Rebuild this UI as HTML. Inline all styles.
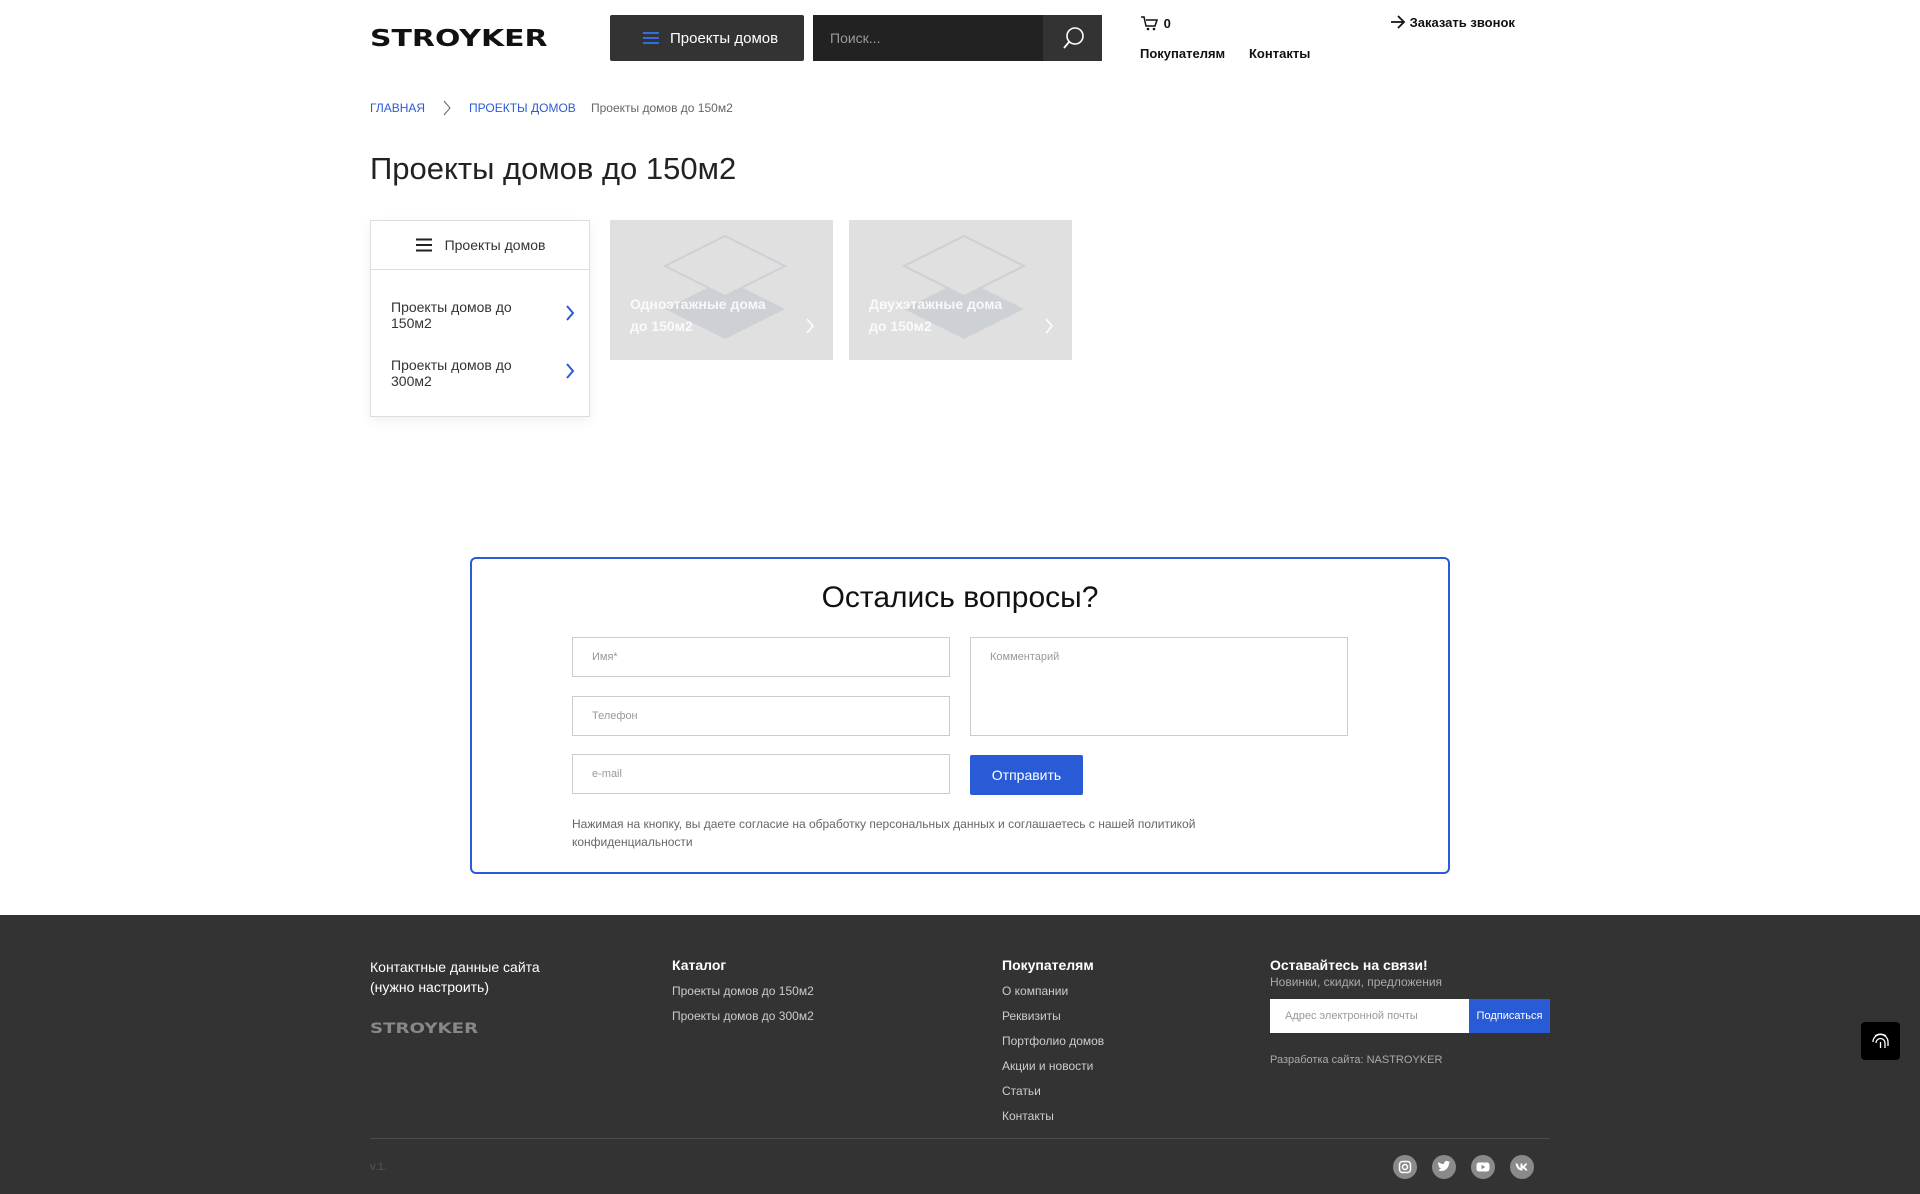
<!DOCTYPE html>
<html><head><meta charset="utf-8"><style>
*{box-sizing:border-box;margin:0;padding:0}
body{width:1920px;height:1194px;position:relative;font-family:"Liberation Sans",sans-serif;background:#fff;color:#222;overflow:hidden}
.a{position:absolute}
.logo{left:370px;top:26px;font-weight:bold;font-size:23px;letter-spacing:0px;color:#111;font-family:"DejaVu Sans",sans-serif;transform:scaleX(1.3);transform-origin:left}
.mbtn{left:610px;top:15px;width:194px;height:46px;background:#333;border-radius:2px;color:#fff;font-size:15px;display:flex;align-items:center;padding-left:32px}
.srch{left:813px;top:15px;width:289px;height:46px;background:#222;color:#999;font-size:14px;padding:15px 0 0 17px}
.sbtn{left:1043px;top:15px;width:59px;height:46px;background:#333}
.nav{font-size:13px;font-weight:bold;color:#111}
.bc{top:101px;font-size:12px}
.side{left:370px;top:220px;width:220px;height:197px;border:1px solid #ddd;box-shadow:0 4px 12px rgba(0,0,0,.06);background:#fff}
.card{top:220px;width:223px;height:140px;background:#e0e0e0;overflow:hidden}
.card .t{position:absolute;left:20px;top:73px;color:#fff;font-weight:bold;font-size:14px;line-height:22px;opacity:.85}
.inp{border:1px solid #ccc;font-size:11px;color:#999;padding:13px 0 0 19px}
.fl{font-size:12px;color:#ccc}
.fh{font-size:14px;font-weight:bold;color:#fff;top:957px}
.soc{top:1155px;width:24px;height:24px;border-radius:50%;background:#8a8a8a}
</style></head><body>
<div class="a logo">STROYKER</div>
<div class="a mbtn"><svg width="18" height="14" style="margin-right:10px"><path d="M1 2h16M1 7h16M1 12h16" stroke="#2f6fe0" stroke-width="2"/></svg>Проекты домов</div>
<div class="a srch">Поиск...</div>
<div class="a sbtn"><svg width="59" height="46"><circle cx="32" cy="21" r="8" stroke="#fff" stroke-width="1.6" fill="none"/><path d="M26 27l-5 6" stroke="#fff" stroke-width="1.8"/></svg></div>
<div class="a nav" style="left:1140px;top:15px"><svg width="20" height="16" style="vertical-align:-3px"><path d="M1 2h3l2 9h9l2-6H6" stroke="#111" stroke-width="1.5" fill="none"/><circle cx="8" cy="14" r="1.3" fill="#111"/><circle cx="14" cy="14" r="1.3" fill="#111"/></svg> 0</div>
<div class="a nav" style="left:1140px;top:46px">Покупателям</div>
<div class="a nav" style="left:1249px;top:46px">Контакты</div>
<div class="a nav" style="left:1390px;top:15px"><svg width="16" height="14" style="vertical-align:-2px"><path d="M1 7h13M8 1l6 6-6 6" stroke="#111" stroke-width="1.8" fill="none"/></svg> Заказать звонок</div>
<div class="a bc" style="left:370px;color:#2a5bd7">ГЛАВНАЯ</div>
<svg class="a" style="left:442px;top:100px" width="10" height="16"><path d="M2 1l6 7-6 7" stroke="#666" fill="none"/></svg>
<div class="a bc" style="left:469px;color:#2a5bd7">ПРОЕКТЫ ДОМОВ</div>
<div class="a bc" style="left:591px;color:#666">Проекты домов до 150м2</div>
<div class="a" style="left:370px;top:151px;font-size:31px;color:#222">Проекты домов до 150м2</div>
<div class="a side">
 <div style="height:49px;border-bottom:1px solid #ddd;display:flex;align-items:center;justify-content:center;font-size:14px;color:#333"><svg width="18" height="14" style="margin-right:12px"><path d="M1 1.5h16M1 7h16M1 12.5h16" stroke="#222" stroke-width="2"/></svg>Проекты домов</div>
 <div class="a" style="left:20px;top:78px;font-size:14px;line-height:16px;color:#333">Проекты домов до<br>150м2</div>
 <svg class="a" style="left:194px;top:84px" width="10" height="16"><path d="M2 1l6 7-6 7" stroke="#2a5bd7" stroke-width="2" fill="none"/></svg>
 <div class="a" style="left:20px;top:136px;font-size:14px;line-height:16px;color:#333">Проекты домов до<br>300м2</div>
 <svg class="a" style="left:194px;top:142px" width="10" height="16"><path d="M2 1l6 7-6 7" stroke="#2a5bd7" stroke-width="2" fill="none"/></svg>
</div>
<div class="a card" style="left:610px"><svg class="a" style="left:50px;top:14px" width="130" height="105"><path d="M65 45l60 30-60 30-60-30z" fill="#cdd0d5"/><path d="M65 2l60 30-60 30-60-30z" fill="#e0e0e0" stroke="#cdd0d5" stroke-width="2"/></svg><div class="t">Одноэтажные дома<br>до 150м2</div><svg class="a" style="left:195px;top:98px" width="10" height="16"><path d="M2 1l6 7-6 7" stroke="#fff" stroke-width="1.5" fill="none"/></svg></div>
<div class="a card" style="left:849px"><svg class="a" style="left:50px;top:14px" width="130" height="105"><path d="M65 45l60 30-60 30-60-30z" fill="#cdd0d5"/><path d="M65 2l60 30-60 30-60-30z" fill="#e0e0e0" stroke="#cdd0d5" stroke-width="2"/></svg><div class="t">Двухэтажные дома<br>до 150м2</div><svg class="a" style="left:195px;top:98px" width="10" height="16"><path d="M2 1l6 7-6 7" stroke="#fff" stroke-width="1.5" fill="none"/></svg></div>
<div class="a" style="left:470px;top:557px;width:980px;height:317px;border:2px solid #2a5bd7;border-radius:6px"></div>
<div class="a" style="left:470px;width:980px;top:581px;text-align:center;font-size:30px;color:#111">Остались вопросы?</div>
<div class="a inp" style="left:572px;top:637px;width:378px;height:40px">Имя*</div>
<div class="a inp" style="left:572px;top:696px;width:378px;height:40px">Телефон</div>
<div class="a inp" style="left:572px;top:754px;width:378px;height:40px">e-mail</div>
<div class="a inp" style="left:970px;top:637px;width:378px;height:99px">Комментарий</div>
<div class="a" style="left:970px;top:755px;width:113px;height:40px;background:#2a5bd7;color:#fff;font-size:14px;text-align:center;line-height:40px;border-radius:2px">Отправить</div>
<div class="a" style="left:572px;top:815px;font-size:12px;line-height:18px;color:#666">Нажимая на кнопку, вы даете согласие на обработку персональных данных и соглашаетесь с нашей политикой<br>конфиденциальности</div>
<div class="a" style="left:0;top:915px;width:1920px;height:279px;background:#333"></div>
<div class="a" style="left:370px;top:957px;font-size:14px;line-height:20px;color:#fff">Контактные данные сайта<br>(нужно настроить)</div>
<div class="a" style="left:370px;top:1021px;font-size:14px;font-weight:bold;font-family:'DejaVu Sans',sans-serif;color:#888;transform:scaleX(1.3);transform-origin:left">STROYKER</div>
<div class="a fh" style="left:672px">Каталог</div>
<div class="a fl" style="left:672px;top:984px">Проекты домов до 150м2</div>
<div class="a fl" style="left:672px;top:1009px">Проекты домов до 300м2</div>
<div class="a fh" style="left:1002px">Покупателям</div>
<div class="a fl" style="left:1002px;top:984px">О компании</div>
<div class="a fl" style="left:1002px;top:1009px">Реквизиты</div>
<div class="a fl" style="left:1002px;top:1034px">Портфолио домов</div>
<div class="a fl" style="left:1002px;top:1059px">Акции и новости</div>
<div class="a fl" style="left:1002px;top:1084px">Статьи</div>
<div class="a fl" style="left:1002px;top:1109px">Контакты</div>
<div class="a fh" style="left:1270px">Оставайтесь на связи!</div>
<div class="a" style="left:1270px;top:975px;font-size:12px;color:#aaa">Новинки, скидки, предложения</div>
<div class="a" style="left:1270px;top:999px;width:199px;height:34px;background:#fff;font-size:11px;color:#999;padding:11px 0 0 15px">Адрес электронной почты</div>
<div class="a" style="left:1469px;top:999px;width:81px;height:34px;background:#2a5bd7;font-size:11px;color:#fff;text-align:center;line-height:34px">Подписаться</div>
<div class="a" style="left:1270px;top:1054px;font-size:11px;color:#aaa">Разработка сайта: NASTROYKER</div>
<div class="a" style="left:370px;top:1138px;width:1180px;height:1px;background:#4a4a4a"></div>
<div class="a" style="left:370px;top:1161px;font-size:11px;color:#555">v.1.</div>
<div class="a soc" style="left:1393px"><svg width="24" height="24"><rect x="6.5" y="6.5" width="11" height="11" rx="3" stroke="#fff" stroke-width="1.5" fill="none"/><circle cx="12" cy="12" r="2.5" stroke="#fff" stroke-width="1.5" fill="none"/></svg></div>
<div class="a soc" style="left:1432px"><svg width="24" height="24"><path d="M6 15c3 2 8 1 10-3 1-2 1-3 1-4l1.5-1.5-2 .3C15 5 12 6 12 9 9 9 7.5 8 6.5 7c-1 2 0 3.5 1 4l-1 0c.5 1.5 1.5 2 2.5 2.2C8 14 7 15 6 15z" fill="#fff"/></svg></div>
<div class="a soc" style="left:1471px"><svg width="24" height="24"><rect x="5.5" y="7.5" width="13" height="9" rx="2.5" fill="#fff"/><path d="M10.5 9.8v4.4l3.8-2.2z" fill="#8a8a8a"/></svg></div>
<div class="a soc" style="left:1510px"><svg width="24" height="24"><path d="M5.5 8.5h2c1 3 2.3 4.5 3 4.5V8.5h2v2.5c1 0 2.2-1.5 2.7-2.5h2c-.4 1.6-2 3-2.7 3.5 1 .6 2.4 1.8 3 3.5h-2.2c-.6-1.2-1.7-2.2-2.8-2.3v2.3h-.8c-3 0-5.3-2.5-6.2-7z" fill="#fff"/></svg></div>
<div class="a" style="left:1861px;top:1022px;width:39px;height:38px;background:#000;border-radius:4px"><svg width="39" height="38"><g stroke="#fff" fill="none" stroke-width="1.3"><path d="M12 20a7.5 7.5 0 0115 0v4"/><path d="M15 21a4.5 4.5 0 019 0v5"/><path d="M19.5 20v6"/><path d="M14 14a9 9 0 0111 0"/></g></svg></div>
</body></html>
